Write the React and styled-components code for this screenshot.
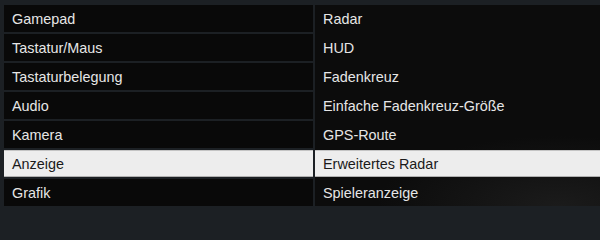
import React from "react";
import styled, { createGlobalStyle } from "styled-components";

const Global = createGlobalStyle`
  html, body { margin: 0; padding: 0; background: #1c2024; height: 206px; overflow: hidden; }
  body { width: 600px; }
`;

const Frame = styled.div`
  display: grid;
  grid-template-columns: 309px 1fr;
  column-gap: 2px;
  padding: 5px 0 0 4px;
  height: 206px;
  box-sizing: border-box;
  font-family: "Liberation Sans", Arial, sans-serif;
  font-size: 14.4px;
`;

const Column = styled.div`
  display: flex;
  flex-direction: column;
  gap: 2px;
  background: ${(p) =>
    p.$panel
      ? "radial-gradient(ellipse 180px 70px at 85% 100%, #1b1b1b 0%, #0c0c0c 100%), #0c0c0c"
      : "transparent"};
`;

const Row = styled.div`
  height: 27px;
  flex: 0 0 27px;
  box-sizing: border-box;
  display: flex;
  align-items: center;
  padding-left: 8px;
  white-space: nowrap;
  color: ${(p) => (p.$active ? "#1a1a1a" : "#e6e6e6")};
  background: ${(p) => (p.$active ? "#ededed" : p.$panel ? "transparent" : "#090909")};
  border-top: 1px solid ${(p) => (p.$active ? "#c4c4c4" : "transparent")};
  border-bottom: 1px solid ${(p) => (p.$active ? "#b0b0b0" : "transparent")};
`;

const left = ["Gamepad", "Tastatur/Maus", "Tastaturbelegung", "Audio", "Kamera", "Anzeige", "Grafik"];
const right = ["Radar", "HUD", "Fadenkreuz", "Einfache Fadenkreuz-Größe", "GPS-Route", "Erweitertes Radar", "Spieleranzeige"];

export default function App() {
  return (
    <>
      <Global />
      <Frame>
        <Column>
          {left.map((t) => (
            <Row key={t} $active={t === "Anzeige"}>{t}</Row>
          ))}
        </Column>
        <Column $panel>
          {right.map((t) => (
            <Row key={t} $panel $active={t === "Erweitertes Radar"}>{t}</Row>
          ))}
        </Column>
      </Frame>
    </>
  );
}
